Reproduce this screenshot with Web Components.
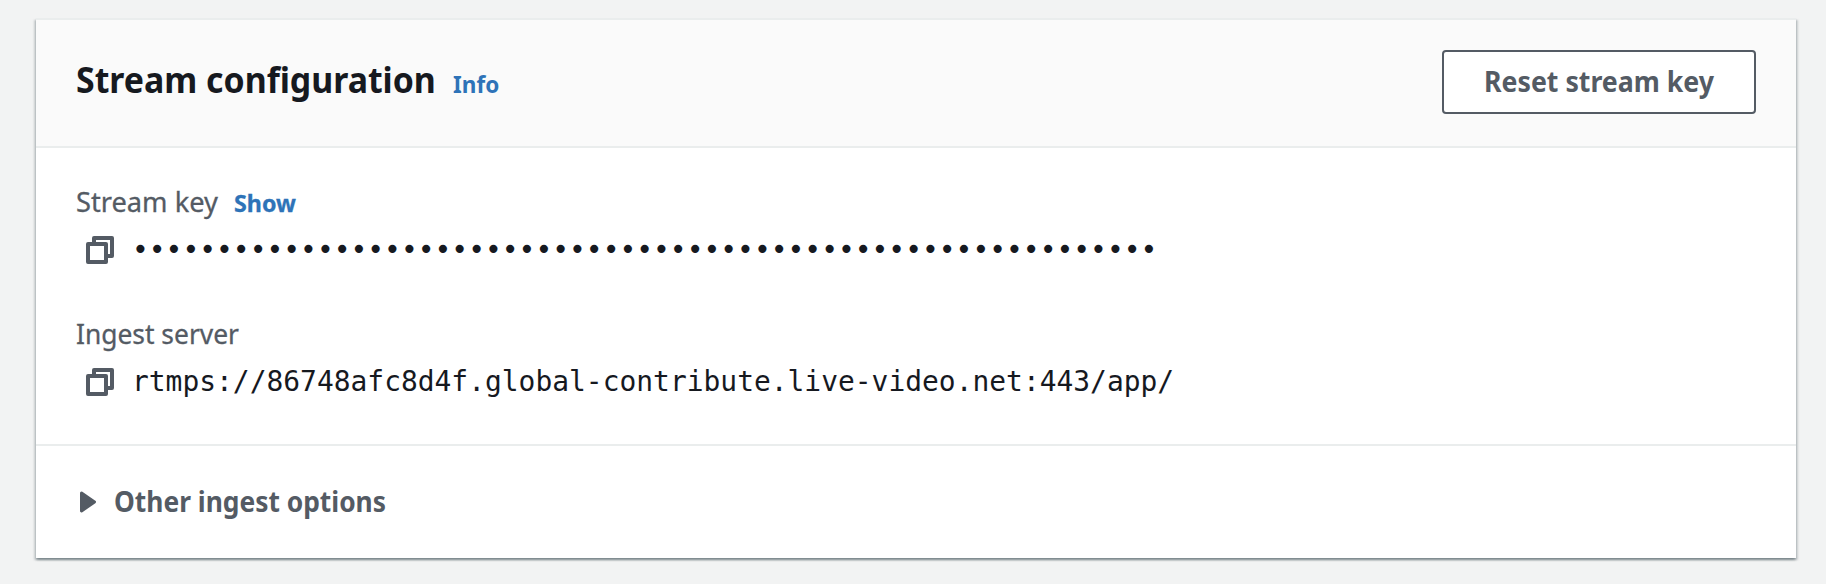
<!DOCTYPE html>
<html lang="en">
<head>
<meta charset="utf-8">
<title>Stream configuration</title>
<style>
html { background: #f2f3f3; }
body { margin: 0; box-sizing: border-box; height: 584px; padding: 18px 30px 0 36px; font-family: "Noto Sans", sans-serif; font-size: 28px; line-height: 36px; color: #16191f; }
</style>
</head>
<body>
<stream-panel>
  <panel-header slot="header">
    <fit-text slot="title" width="360">Stream configuration</fit-text>
    <text-link slot="info"><fit-text width="46">Info</fit-text></text-link>
    <outline-button slot="action"><fit-text width="230">Reset stream key</fit-text></outline-button>
  </panel-header>
  <key-value>
    <fit-text slot="label" width="142">Stream key</fit-text>
    <text-link slot="link"><fit-text width="62">Show</fit-text></text-link>
    <fit-text width="1025">•••••••••••••••••••••••••••••••••••••••••••••••••••••••••••••</fit-text>
  </key-value>
  <key-value>
    <fit-text slot="label" width="163">Ingest server</fit-text>
    <fit-text width="1042">rtmps://86748afc8d4f.global-contribute.live-video.net:443/app/</fit-text>
  </key-value>
  <expand-toggle slot="footer"><fit-text width="272">Other ingest options</fit-text></expand-toggle>
</stream-panel>
<script>
function define(name, html, ready) {
  customElements.define(name, class extends HTMLElement {
    constructor() {
      super();
      this.attachShadow({ mode: "open" }).innerHTML = html;
    }
    connectedCallback() { if (ready) ready(this); }
  });
}

define("stream-panel", `
<style>
:host { display: block; background: #fff; border-top: 2px solid #eaeded;
  box-shadow: 0 2px 2px 0 rgba(0,28,36,.3), 2px 2px 2px 0 rgba(0,28,36,.15), -2px 2px 2px 0 rgba(0,28,36,.15); }
.body { display: flex; flex-direction: column; gap: 47px; padding: 35px 40px 44px; }
.footer { border-top: 2px solid #eaeded; padding: 37px 40px 39px; }
</style>
<slot name="header"></slot>
<div class="body"><slot></slot></div>
<div class="footer"><slot name="footer"></slot></div>`);

define("panel-header", `
<style>
:host { display: flex; justify-content: space-between; align-items: flex-start; box-sizing: border-box;
  height: 128px; padding: 30px 40px 0; background: #fafafa; border-bottom: 2px solid #eaeded; }
.heading { display: flex; align-items: baseline; gap: 17px; margin-top: 3px; line-height: 54px; }
.title { font-size: 36px; font-weight: 700; }
</style>
<div class="heading"><div class="title"><slot name="title"></slot></div><slot name="info"></slot></div>
<slot name="action"></slot>`);

define("text-link", `
<style>:host { display: block; color: #2e73b8; font-size: 24px; font-weight: 700; cursor: pointer; }</style>
<slot></slot>`);

define("outline-button", `
<style>
button { display: flex; justify-content: center; align-items: center; box-sizing: border-box; width: 314px; height: 64px;
  margin: 0; padding: 0 0 2px; border: 2px solid #545b64; border-radius: 4px; background: #fff;
  color: #545b64; font: inherit; font-weight: 700; }
:host { display: block; }
</style>
<button><slot></slot></button>`);

define("copy-icon", `
<style>:host { display: block; width: 28px; height: 28px; } svg { display: block; }</style>
<svg width="28" height="28" viewBox="0 0 28 28" fill="none" stroke="#545b64" stroke-width="4" stroke-linejoin="round">
<path d="M8 6V2H26V20H22"/><path d="M2 8H20V26H2Z"/></svg>`);

define("key-value", `
<style>
:host { display: flex; flex-direction: column; gap: 13px; }
.label { display: flex; align-items: baseline; gap: 16px; color: #545b64; height: 36px; -webkit-text-stroke: .3px; }
.value { display: flex; align-items: center; gap: 18px; height: 36px; padding-left: 10px; font-family: "DejaVu Sans Mono", monospace; }
</style>
<div class="label"><slot name="label"></slot><slot name="link"></slot></div>
<div class="value"><copy-icon></copy-icon><slot></slot></div>`);

define("expand-toggle", `
<style>
:host { display: flex; align-items: center; gap: 18px; padding-left: 4px; color: #545b64; font-weight: 700; }
svg { display: block; margin-top: 2px; }
</style>
<svg width="16" height="22" viewBox="0 0 16 22"><path d="M1.5 2 14.5 11 1.5 20Z" fill="#545b64" stroke="#545b64" stroke-width="3" stroke-linejoin="round"/></svg>
<slot></slot>`);

/* Sets a line of text to an exact width by condensing its glyphs. */
define("fit-text", `
<style>
:host { display: block; white-space: nowrap; }
span { display: inline-block; transform-origin: 0 50%; }
</style><span><slot></slot></span>`, (el) => {
  const width = Number(el.getAttribute("width"));
  const span = el.shadowRoot.querySelector("span");
  el.style.width = width + "px";
  requestAnimationFrame(() => {
    span.style.transform = "scaleX(" + width / span.offsetWidth + ")";
  });
});
</script>
</body>
</html>
